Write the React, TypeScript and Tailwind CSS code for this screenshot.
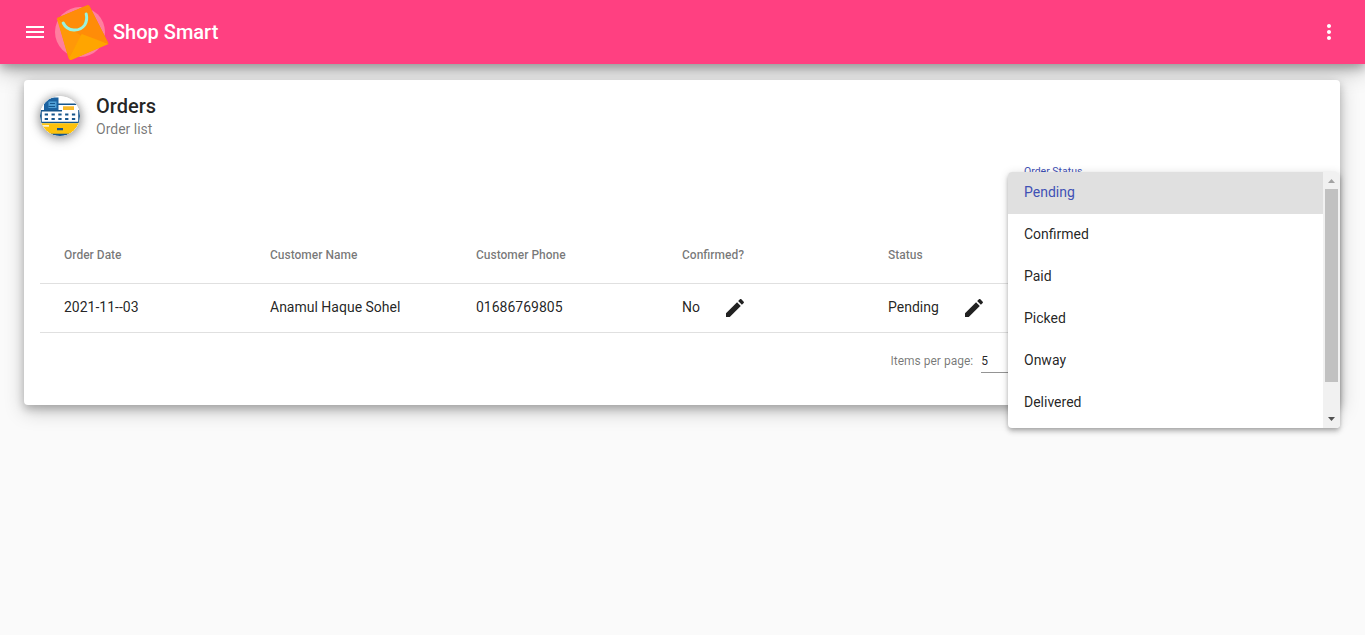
import React from "react";

const headerShadow = "shadow-[0_4px_9px_0_rgba(0,0,0,0.24),0_7px_22px_0_rgba(0,0,0,0.26)]";
const cardShadow = "shadow-[0_4px_8px_0_rgba(0,0,0,0.22),0_6px_20px_0_rgba(0,0,0,0.21)]";

const statuses = ["Pending", "Confirmed", "Paid", "Picked", "Onway", "Delivered"];
const columns = ["Order Date", "Customer Name", "Customer Phone", "Confirmed?", "Status"];

function MenuIcon() {
  return (
    <svg className="size-6" viewBox="0 0 24 24" fill="currentColor">
      <path d="M3 18h18v-2H3v2zm0-5h18v-2H3v2zm0-7v2h18V6H3z" />
    </svg>
  );
}

function MoreIcon() {
  return (
    <svg className="size-6" viewBox="0 0 24 24" fill="currentColor">
      <path d="M12 8c1.1 0 2-.9 2-2s-.9-2-2-2-2 .9-2 2 .9 2 2 2zm0 2c-1.1 0-2 .9-2 2s.9 2 2 2 2-.9 2-2-.9-2-2-2zm0 6c-1.1 0-2 .9-2 2s.9 2 2 2 2-.9 2-2-.9-2-2-2z" />
    </svg>
  );
}

function EditIcon() {
  return (
    <svg className="size-6" viewBox="0 0 24 24" fill="currentColor">
      <path d="M3 17.25V21h3.75L17.81 9.94l-3.75-3.75L3 17.25zM20.71 7.04c.39-.39.39-1.02 0-1.41l-2.34-2.34c-.39-.39-1.02-.39-1.41 0l-1.83 1.83 3.75 3.75 1.83-1.83z" />
    </svg>
  );
}

function BagLogo() {
  return (
    <svg className="h-16 w-[62px] shrink-0" viewBox="0 0 62 64">
      <circle cx="32" cy="32" r="25" fill="#ff7f9f" />
      <g transform="translate(0.7 0)">
        <path d="M8.500 18L38 5.500Q40 4.500 41 6.500L59.800 43.500L23 59.800Q21 60.500 20 58.500Z" fill="#fb8500" />
        <path d="M8.500 18L33 36L59.800 43.500L41 6.500Q40 4.500 38 5.500Z" fill="#ff8c08" />
        <path d="M8 18L33 36L20 58.500Z" fill="#ff9808" />
        <path d="M33 34L59.800 44L23 59.800Q20.500 60.500 20.300 58Z" fill="#ffa500" />
        <path d="M14.500 23C19 32 31 32 36 25Q39 20 37.500 14" fill="none" stroke="#99f2df" strokeWidth="3" strokeLinecap="round" />
      </g>
    </svg>
  );
}

function RegisterAvatar() {
  return (
    <svg
      className="size-10 shrink-0 rounded-full shadow-[0_1px_8px_1px_rgba(0,0,0,0.3),0_3px_14px_0_rgba(0,0,0,0.2)]"
      viewBox="0 0 40 40"
    >
      <defs>
        <clipPath id="avatar">
          <circle cx="20" cy="20" r="20" />
        </clipPath>
      </defs>
      <g clipPath="url(#avatar)">
        <path d="M0 0h40v40H0z" fill="#fff" />
        <path d="M0 14h1.8v13H0zM38.2 14H40v13h-1.8zM18 7.6h20v1.5H18zM0 14h22v1.5H0zM0 25.8h40v1.5H0z" fill="#17568c" />
        <path d="M4 14V7.5Q4 5 7 5V3q0-1.500 2-1.500h9.500V14z" fill="#1c62a0" />
        <path d="M8.5 5.5h8V12h-8z" fill="#4f9fd6" />
        <path d="M10 7.5h5M8.5 10.5H15" stroke="#17568c" strokeWidth="1.1" />
        <path d="M23 10.3h11V14H23z" fill="#f8b928" />
        <path d="M4.700 18.600h31M4.700 22.900h31" stroke="#17568c" strokeWidth="2" strokeDasharray="3.300 3.500" />
        <path d="M0 27.3h40V38H0z" fill="#fdc20c" />
        <path d="M3 29h6v1.8H3z" fill="#fff3c7" />
        <path d="M17 32h6v2.2h-6z" fill="#17568c" />
        <path d="M0 37.800h40V40H0z" fill="#17568c" />
      </g>
    </svg>
  );
}

function StatusMenu() {
  return (
    <div className="absolute top-[172px] left-[1008px] flex h-64 w-[332px] overflow-hidden rounded bg-white shadow-[0_2px_4px_-1px_rgba(0,0,0,0.2),0_4px_5px_0_rgba(0,0,0,0.14),0_1px_10px_0_rgba(0,0,0,0.12)]">
      <div className="flex-1 overflow-hidden">
        {statuses.map((status, i) => (
          <div
            key={status}
            className={`flex h-[42px] items-center px-4 pb-0.5 text-sm ${i === 0 ? "bg-[#e0e0e0] text-[#3f51b5]" : "text-black/87"}`}
          >
            {status}
          </div>
        ))}
      </div>
      <div className="flex w-[17px] flex-col items-center bg-[#f1f1f1]">
        <svg className="h-[17px] w-[17px]" viewBox="0 0 17 17">
          <path d="M5 11h7L8.5 7z" fill="#a3a3a3" />
        </svg>
        <div className="h-[193px] w-[13px] bg-[#c1c1c1]" />
        <svg className="mt-auto h-[17px] w-[17px]" viewBox="0 0 17 17">
          <path d="M5 6h7l-3.5 4z" fill="#505050" />
        </svg>
      </div>
    </div>
  );
}

export default function App() {
  return (
    <div className="relative h-[635px] w-[1365px] overflow-hidden bg-[#fafafa] font-['Roboto',sans-serif] text-black/87">
      <header
        className={`flex h-16 items-center bg-[#ff4081] pr-6 pl-[23px] text-white ${headerShadow}`}
      >
        <MenuIcon />
        <div className="flex w-[66px] pl-px">
          <BagLogo />
        </div>
        <h1 className="text-xl font-medium">Shop Smart</h1>
        <div className="ml-auto">
          <MoreIcon />
        </div>
      </header>

      <main className="pt-4 pr-[25px] pl-6">
        <section className={`h-[325px] rounded bg-white p-4 ${cardShadow}`}>
          <div className="flex h-10 gap-4">
            <RegisterAvatar />
            <div className="-mt-1.5">
              <h2 className="text-xl leading-8 font-medium">Orders</h2>
              <p className="text-sm leading-[14px] text-black/54">Order list</p>
            </div>
          </div>

          <div className="flex h-[92px] justify-end pt-[30px]">
            <div className="w-[300px] text-[10.5px] leading-3 text-[#3f51b5]">Order Status</div>
          </div>

          <div className="grid h-14 grid-cols-[230px_206px_206px_206px_1fr] items-center border-b border-black/12 pb-px text-xs font-medium text-black/54">
            {columns.map((column, i) => (
              <div key={column} className={i === 0 ? "pl-6" : ""}>
                {column}
              </div>
            ))}
          </div>
          <div className="grid h-[49px] grid-cols-[230px_206px_206px_206px_1fr] items-center border-b border-black/12 text-sm">
            <div className="pb-0.5 pl-6">2021-11--03</div>
            <div className="pb-0.5">Anamul Haque Sohel</div>
            <div className="pb-0.5">01686769805</div>
            <div className="flex items-center gap-[23px]">
              <span className="pb-0.5">No</span>
              <EditIcon />
            </div>
            <div className="flex items-center gap-[23px]">
              <span className="pb-0.5">Pending</span>
              <EditIcon />
            </div>
          </div>

          <div className="flex h-14 items-center pl-[850.5px] text-xs text-black/54">
            Items per page:
            <div className="ml-2 flex h-6 w-14 items-center border-b border-black/42 text-black/87">
              5
            </div>
          </div>
        </section>
      </main>
      <StatusMenu />
    </div>
  );
}
